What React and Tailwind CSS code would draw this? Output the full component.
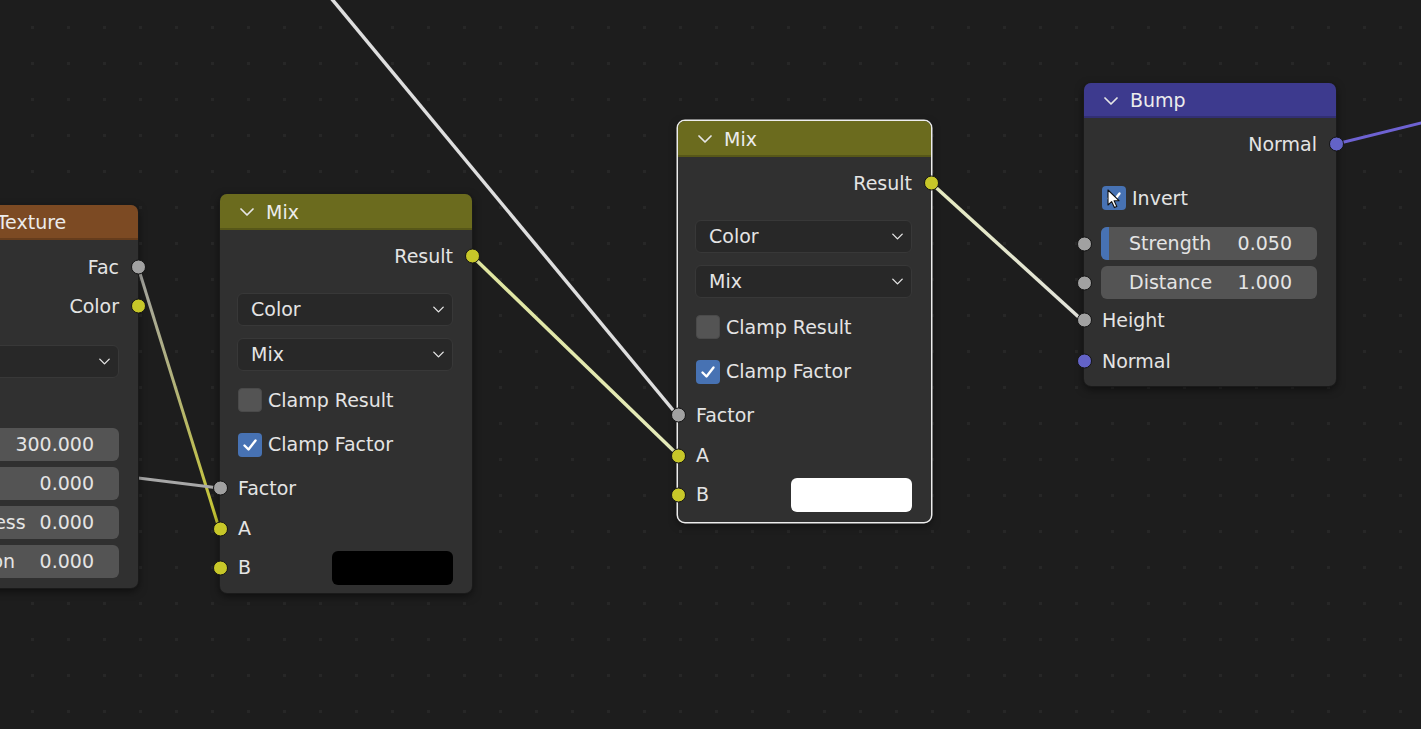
import React from 'react';

const socketColors = {
  gray: 'bg-[#a1a1a1]',
  yellow: 'bg-[#c7c729]',
  purple: 'bg-[#6363c7]',
};

const Socket = ({ color, side }) => (
  <span
    className={`absolute top-1/2 -translate-y-1/2 w-[15px] h-[15px] rounded-full border-[1.5px] border-[#141414] ${
      side === 'left' ? '-left-[7.5px]' : '-right-[7.5px]'
    } ${socketColors[color]}`}
  />
);

const Chevron = ({ className }) => (
  <svg className={className} viewBox="0 0 14 8" fill="none">
    <path d="M1 1 L7 7 L13 1" stroke="#e6e6e6" strokeWidth="1.7" strokeLinecap="round" strokeLinejoin="round" />
  </svg>
);

const OutRow = ({ label, socket, className }) => (
  <div className={`relative flex items-center justify-end pr-[19px] ${className}`}>
    <span>{label}</span>
    <Socket color={socket} side="right" />
  </div>
);

const InRow = ({ label, socket, className, children }) => (
  <div className={`relative flex items-center pl-[18px] ${className}`}>
    <span>{label}</span>
    {children}
    <Socket color={socket} side="left" />
  </div>
);

const Dropdown = ({ label, className }) => (
  <div
    className={`ml-[17px] mr-[19px] h-[33px] rounded-[6px] bg-[#282828] border border-[#383838] flex items-center justify-between pl-[13px] pr-[8px] ${className}`}
  >
    <span>{label}</span>
    <Chevron className="w-[11px] h-[7px]" />
  </div>
);

const CheckRow = ({ label, checked, className, cursor }) => (
  <div className={`flex items-center pl-[18px] gap-[6px] ${className}`}>
    <div
      className={`relative w-[24px] h-[24px] rounded-[4px] flex items-center justify-center ${
        checked ? 'bg-[#4772b3]' : 'bg-[#545454] border border-[#4a4a4a]'
      }`}
    >
      {checked && (
        <svg className="w-[16px] h-[16px]" viewBox="0 0 16 16" fill="none">
          <path d="M2.5 8.5 L6.5 12.5 L13.5 3.5" stroke="#ffffff" strokeWidth="2.4" strokeLinecap="round" strokeLinejoin="round" />
        </svg>
      )}
      {cursor && (
        <svg className="absolute left-[5px] top-[3px] w-[14px] h-[20px]" viewBox="0 0 14 20">
          <path d="M1 1 L1 16 L4.6 12.6 L7.4 18.6 L9.8 17.5 L7.1 11.7 L12 11.7 Z" fill="#ffffff" stroke="#111111" strokeWidth="1.1" strokeLinejoin="round" />
        </svg>
      )}
    </div>
    <span>{label}</span>
  </div>
);

const Field = ({ label, value, socket, className, fill, pad = 'pl-[28px]' }) => (
  <div className={`relative ${className}`}>
    <div
      className={`relative ml-[17px] mr-[19px] h-[33px] rounded-[6px] bg-[#545454] overflow-hidden flex items-center justify-between pr-[25px] ${pad}`}
    >
      {fill && <span className="absolute left-0 top-0 bottom-0 w-[8px] bg-[#4772b3]" />}
      <span className="relative">{label}</span>
      <span className="relative">{value}</span>
    </div>
    {socket && <Socket color={socket} side="left" />}
  </div>
);

const Node = ({ className, header, title, selected, children }) => (
  <div
    className={`absolute rounded-[7px] bg-[#303030] ${
      selected
        ? 'ring-[1.5px] ring-[#ededed] shadow-[0_3px_8px_rgba(0,0,0,0.55)]'
        : 'ring-1 ring-[#1a1a1a] shadow-[0_3px_8px_rgba(0,0,0,0.55)]'
    } ${className}`}
  >
    <div
      className={`flex items-center pl-[20px] gap-[12px] rounded-t-[7px] shadow-[inset_0_-2px_0_rgba(0,0,0,0.18)] ${header}`}
    >
      <Chevron className="w-[14px] h-[8px]" />
      <span className="text-[#ececec]">{title}</span>
    </div>
    {children}
  </div>
);

const MixBody = ({ swatch, pb }) => (
  <div className={`pt-[8px] ${pb}`}>
    <OutRow className="h-[36px]" label="Result" socket="yellow" />
    <Dropdown className="mt-[19px]" label="Color" />
    <Dropdown className="mt-[12px]" label="Mix" />
    <CheckRow className="mt-[7px] h-[44px]" label="Clamp Result" />
    <CheckRow className="h-[45px]" label="Clamp Factor" checked />
    <InRow className="h-[42px]" label="Factor" socket="gray" />
    <InRow className="h-[39px]" label="A" socket="yellow" />
    <InRow className="h-[39px]" label="B" socket="yellow">
      <span className={`ml-auto mr-[19px] w-[121px] h-[34px] rounded-[6px] ${swatch}`} />
    </InRow>
  </div>
);

const Wires = () => (
  <svg className="absolute inset-0 w-full h-full" viewBox="0 0 1421 729">
    <defs>
      <pattern id="grid" width="36" height="36" patternUnits="userSpaceOnUse">
        <rect x="31" y="26" width="3" height="3" fill="#272727" />
      </pattern>
      <linearGradient id="facA" gradientUnits="userSpaceOnUse" x1="138" y1="267" x2="219" y2="528">
        <stop offset="0" stopColor="#a4a4a4" />
        <stop offset="0.45" stopColor="#b3b37a" />
        <stop offset="1" stopColor="#c9c92e" />
      </linearGradient>
      <linearGradient id="resA" gradientUnits="userSpaceOnUse" x1="472" y1="256" x2="678" y2="455">
        <stop offset="0" stopColor="#dfe59e" />
        <stop offset="1" stopColor="#e6ebbb" />
      </linearGradient>
      <linearGradient id="resH" gradientUnits="userSpaceOnUse" x1="931" y1="183" x2="1083" y2="321">
        <stop offset="0" stopColor="#e6ebbf" />
        <stop offset="1" stopColor="#e2e2dc" />
      </linearGradient>
    </defs>
    <rect width="1421" height="729" fill="url(#grid)" />
    <line x1="331" y1="-2" x2="678" y2="416" stroke="#dedede" strokeWidth="3.5" />
    <line x1="472" y1="256" x2="678" y2="455" stroke="url(#resA)" strokeWidth="3.5" />
    <line x1="931" y1="183" x2="1083" y2="321" stroke="url(#resH)" strokeWidth="3.5" />
    <line x1="138" y1="267" x2="219" y2="528" stroke="url(#facA)" strokeWidth="3" />
    <line x1="130" y1="477" x2="219" y2="488" stroke="#a8a8a8" strokeWidth="3" />
    <line x1="1336" y1="144" x2="1425" y2="122" stroke="#6e62d2" strokeWidth="3" />
  </svg>
);

export default function App() {
  return (
    <div className="relative w-[1421px] h-[729px] overflow-hidden bg-[#1d1d1d] font-['DejaVu_Sans','Liberation_Sans',sans-serif] text-[19px] leading-none text-[#e4e4e4]">
      <Wires />

      {/* texture node, cut off at the left edge */}
      <Node className="left-[-108px] top-[205px] w-[246px]" header="h-[35px] bg-[#7c4a23]" title="Noise Texture">
        <div className="pt-[8px] pb-[10px]">
          <OutRow className="h-[38px]" label="Fac" socket="gray" />
          <OutRow className="h-[40px]" label="Color" socket="yellow" />
          <Dropdown className="mt-[19px]" label="3D" />
          <Field className="mt-[50px]" label="Scale" value="300.000" pad="pl-[13px]" />
          <Field className="mt-[6px]" label="Detail" value="0.000" pad="pl-[13px]" />
          <Field className="mt-[6px]" label="Roughness" value="0.000" pad="pl-[13px]" />
          <Field className="mt-[6px]" label="Distortion" value="0.000" pad="pl-[13px]" />
        </div>
      </Node>

      <Node className="left-[220px] top-[194px] w-[252px]" header="h-[36px] bg-[#6b6b1e]" title="Mix">
        <MixBody swatch="bg-black" pb="pb-[6px]" />
      </Node>

      <Node className="left-[678px] top-[121px] w-[253px]" header="h-[36px] bg-[#6b6b1e]" title="Mix" selected>
        <MixBody swatch="bg-white" pb="pb-[8px]" />
      </Node>

      <Node className="left-[1084px] top-[83px] w-[252px]" header="h-[35px] bg-[#3d3a8e]" title="Bump">
        <div className="pt-[8px] pb-[5px]">
          <OutRow className="h-[36px]" label="Normal" socket="purple" />
          <CheckRow className="mt-[14px] h-[44px]" label="Invert" checked cursor />
          <Field className="mt-[7px]" label="Strength" value="0.050" socket="gray" fill />
          <Field className="mt-[6px]" label="Distance" value="1.000" socket="gray" />
          <InRow className="h-[42px]" label="Height" socket="gray" />
          <InRow className="h-[40px]" label="Normal" socket="purple" />
        </div>
      </Node>
    </div>
  );
}
